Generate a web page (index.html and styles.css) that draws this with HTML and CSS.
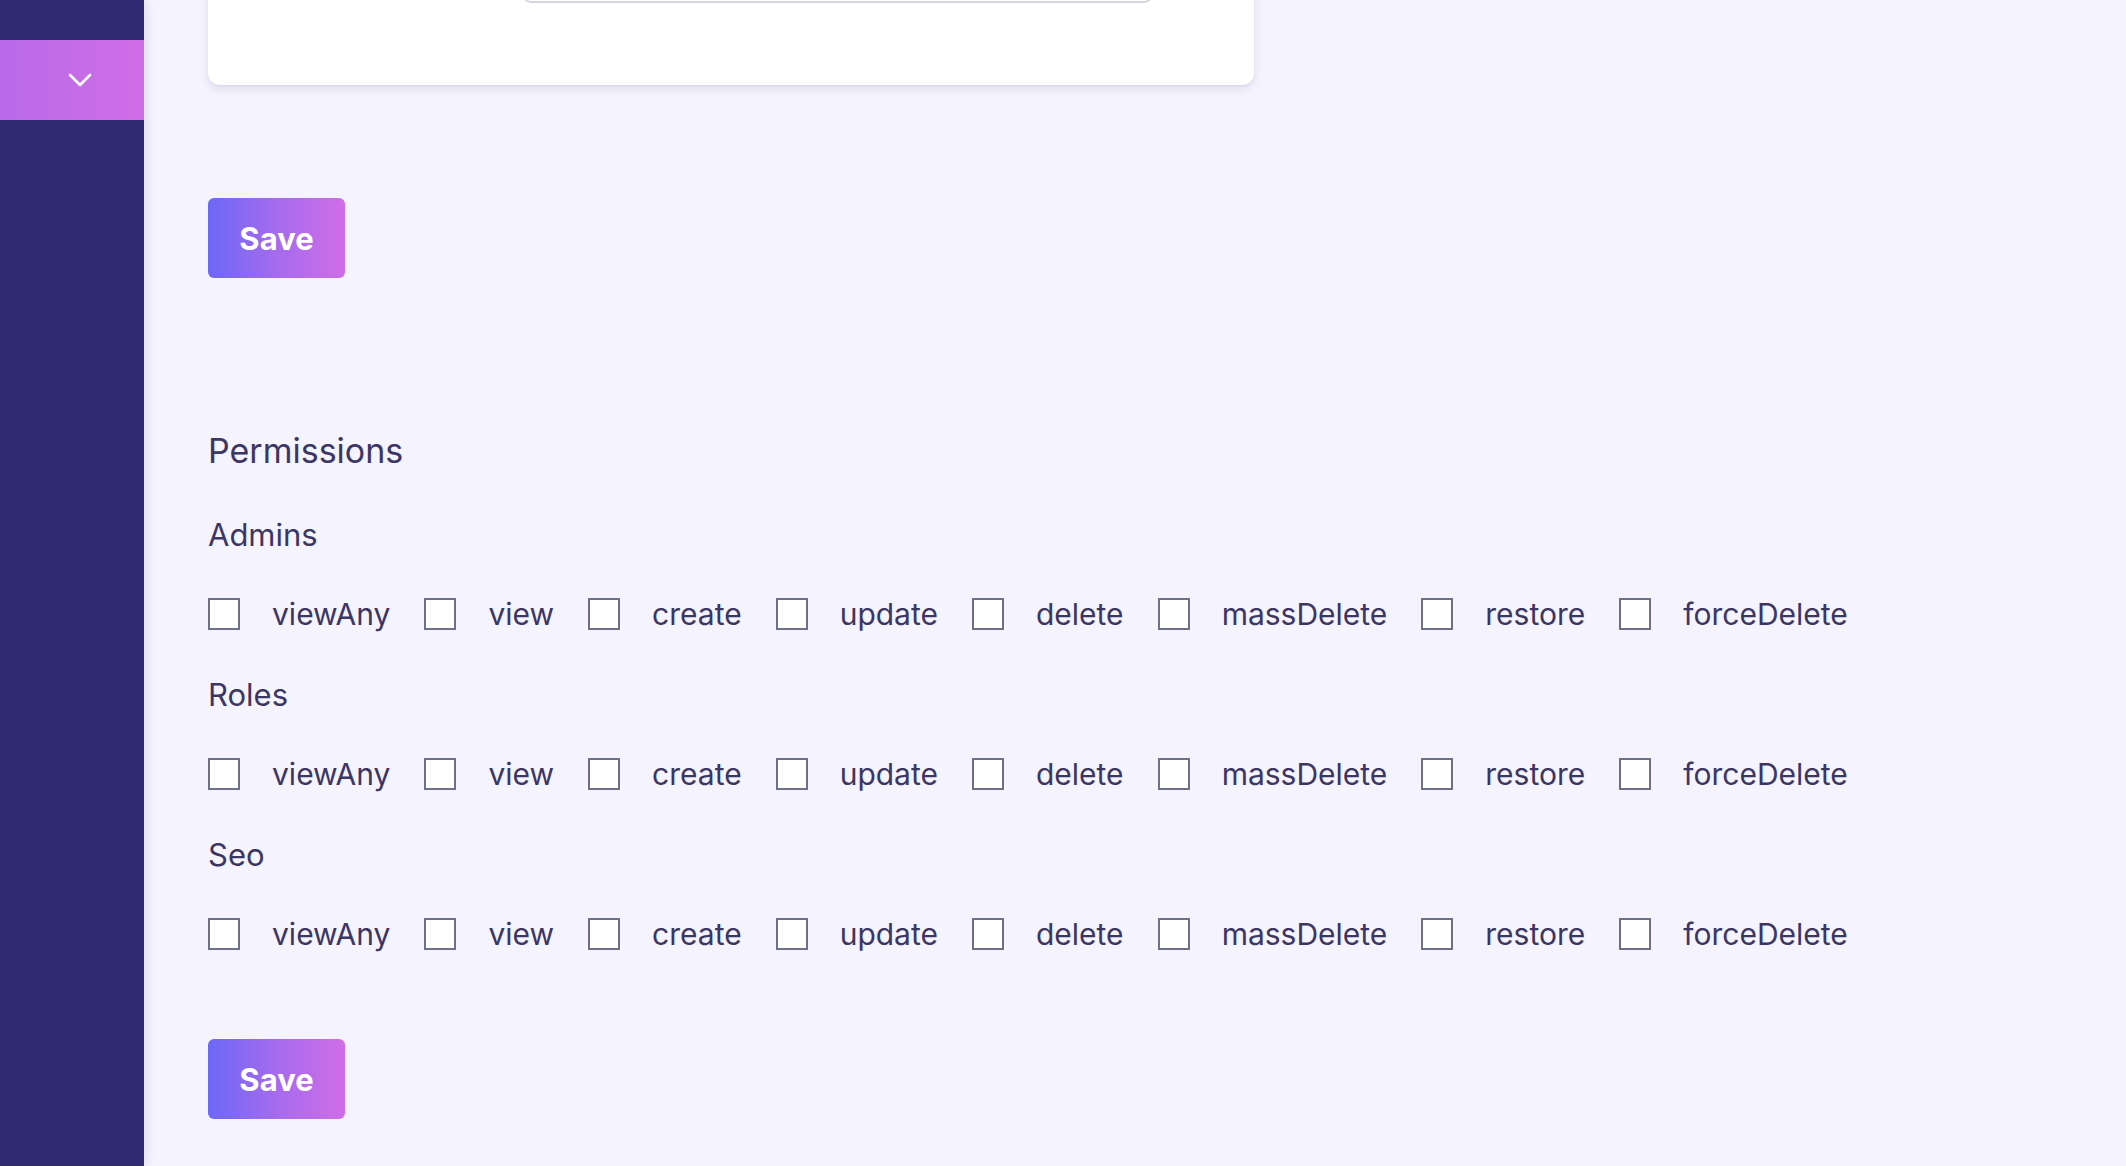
FILE: index.html
```html
<!DOCTYPE html>
<html lang="en">
<head>
<meta charset="utf-8">
<title>Role permissions</title>
<link rel="stylesheet" href="styles.css">
</head>
<body>
<div class="layout">
  <aside class="sidebar">
    <div class="sidebar-toggle">
      <svg width="24" height="14" viewBox="0 0 24 14" fill="none"><path d="M2 2 L12 12 L22 2" stroke="#ffffff" stroke-width="2.6" stroke-linecap="round" stroke-linejoin="round"/></svg>
    </div>
  </aside>
  <main class="main">
    <div class="card">
      <div class="card-input"></div>
    </div>
    <button class="btn-save btn-first">Save</button>

    <h2 class="section-title">Permissions</h2>

    <div class="group">
      <div class="group-label">Admins</div>
      <div class="perm-row">
        <label class="perm"><span class="box"></span><span class="perm-text">viewAny</span></label>
        <label class="perm"><span class="box"></span><span class="perm-text">view</span></label>
        <label class="perm"><span class="box"></span><span class="perm-text">create</span></label>
        <label class="perm"><span class="box"></span><span class="perm-text">update</span></label>
        <label class="perm"><span class="box"></span><span class="perm-text">delete</span></label>
        <label class="perm"><span class="box"></span><span class="perm-text">massDelete</span></label>
        <label class="perm"><span class="box"></span><span class="perm-text">restore</span></label>
        <label class="perm"><span class="box"></span><span class="perm-text">forceDelete</span></label>
      </div>
    </div>

    <div class="group">
      <div class="group-label">Roles</div>
      <div class="perm-row">
        <label class="perm"><span class="box"></span><span class="perm-text">viewAny</span></label>
        <label class="perm"><span class="box"></span><span class="perm-text">view</span></label>
        <label class="perm"><span class="box"></span><span class="perm-text">create</span></label>
        <label class="perm"><span class="box"></span><span class="perm-text">update</span></label>
        <label class="perm"><span class="box"></span><span class="perm-text">delete</span></label>
        <label class="perm"><span class="box"></span><span class="perm-text">massDelete</span></label>
        <label class="perm"><span class="box"></span><span class="perm-text">restore</span></label>
        <label class="perm"><span class="box"></span><span class="perm-text">forceDelete</span></label>
      </div>
    </div>

    <div class="group group-last">
      <div class="group-label">Seo</div>
      <div class="perm-row">
        <label class="perm"><span class="box"></span><span class="perm-text">viewAny</span></label>
        <label class="perm"><span class="box"></span><span class="perm-text">view</span></label>
        <label class="perm"><span class="box"></span><span class="perm-text">create</span></label>
        <label class="perm"><span class="box"></span><span class="perm-text">update</span></label>
        <label class="perm"><span class="box"></span><span class="perm-text">delete</span></label>
        <label class="perm"><span class="box"></span><span class="perm-text">massDelete</span></label>
        <label class="perm"><span class="box"></span><span class="perm-text">restore</span></label>
        <label class="perm"><span class="box"></span><span class="perm-text">forceDelete</span></label>
      </div>
    </div>

    <button class="btn-save">Save</button>
  </main>
</div>
</body>
</html>
```

FILE: styles.css
```css
html, body {
  margin: 0;
  padding: 0;
  height: 1166px;
  overflow: hidden;
}
body {
  background: #f5f3fe;
  font-family: Inter, "Noto Sans", "Liberation Sans", sans-serif;
  color: #3b3663;
}
.layout {
  display: flex;
  height: 1166px;
}
.sidebar {
  width: 144px;
  flex: 0 0 144px;
  background: #2e2b72;
  box-shadow: 2px 0 10px rgba(30, 20, 80, 0.10);
  padding-top: 40px;
  box-sizing: border-box;
  position: relative;
  z-index: 1;
}
.sidebar-toggle {
  height: 80px;
  background: linear-gradient(90deg, #b86ae9 0%, #d06de6 100%);
  display: flex;
  align-items: center;
  justify-content: center;
  box-sizing: border-box;
  padding-left: 16px;
}
.main {
  flex: 1;
  padding-left: 64px;
  display: flex;
  flex-direction: column;
  align-items: flex-start;
}
.card {
  width: 1046px;
  height: 200px;
  margin-top: -115px;
  background: #ffffff;
  border-radius: 12px;
  box-shadow: 0 4px 10px rgba(40, 30, 90, 0.10), 0 1px 2px rgba(40, 30, 90, 0.06);
  box-sizing: border-box;
  padding-top: 70px;
  padding-left: 314px;
}
.card-input {
  width: 631px;
  height: 48px;
  border: 2px solid #d4d7de;
  border-radius: 9px;
  box-sizing: border-box;
}
.btn-save {
  width: 137px;
  height: 80px;
  border: none;
  border-radius: 6px;
  background: linear-gradient(90deg, #6c68f6 0%, #a56bee 50%, #d06de6 100%);
  color: #ffffff;
  font-family: Inter, "Noto Sans", "Liberation Sans", sans-serif;
  font-weight: 700;
  font-size: 31px;
  padding: 0;
  cursor: pointer;
}
.btn-first {
  margin-top: 113px;
}
.section-title {
  margin: 151px 0 0 0;
  font-size: 34px;
  line-height: 43px;
  font-weight: 400;
  color: #3b3663;
}
.group {
  margin-top: 43px;
}
.group + .group {
  margin-top: 45px;
}
.group-label {
  font-size: 31px;
  line-height: 40px;
  margin-bottom: 43px;
}
.perm-row {
  display: flex;
  align-items: center;
  gap: 34px;
}
.perm {
  display: flex;
  align-items: center;
  gap: 32px;
  height: 32px;
}
.box {
  width: 32px;
  height: 32px;
  box-sizing: border-box;
  border: 2px solid #6e7185;
  background: #ffffff;
}
.perm-text {
  font-size: 30px;
  line-height: 32px;
}
.group-last {
  margin-bottom: 89px;
}
```
